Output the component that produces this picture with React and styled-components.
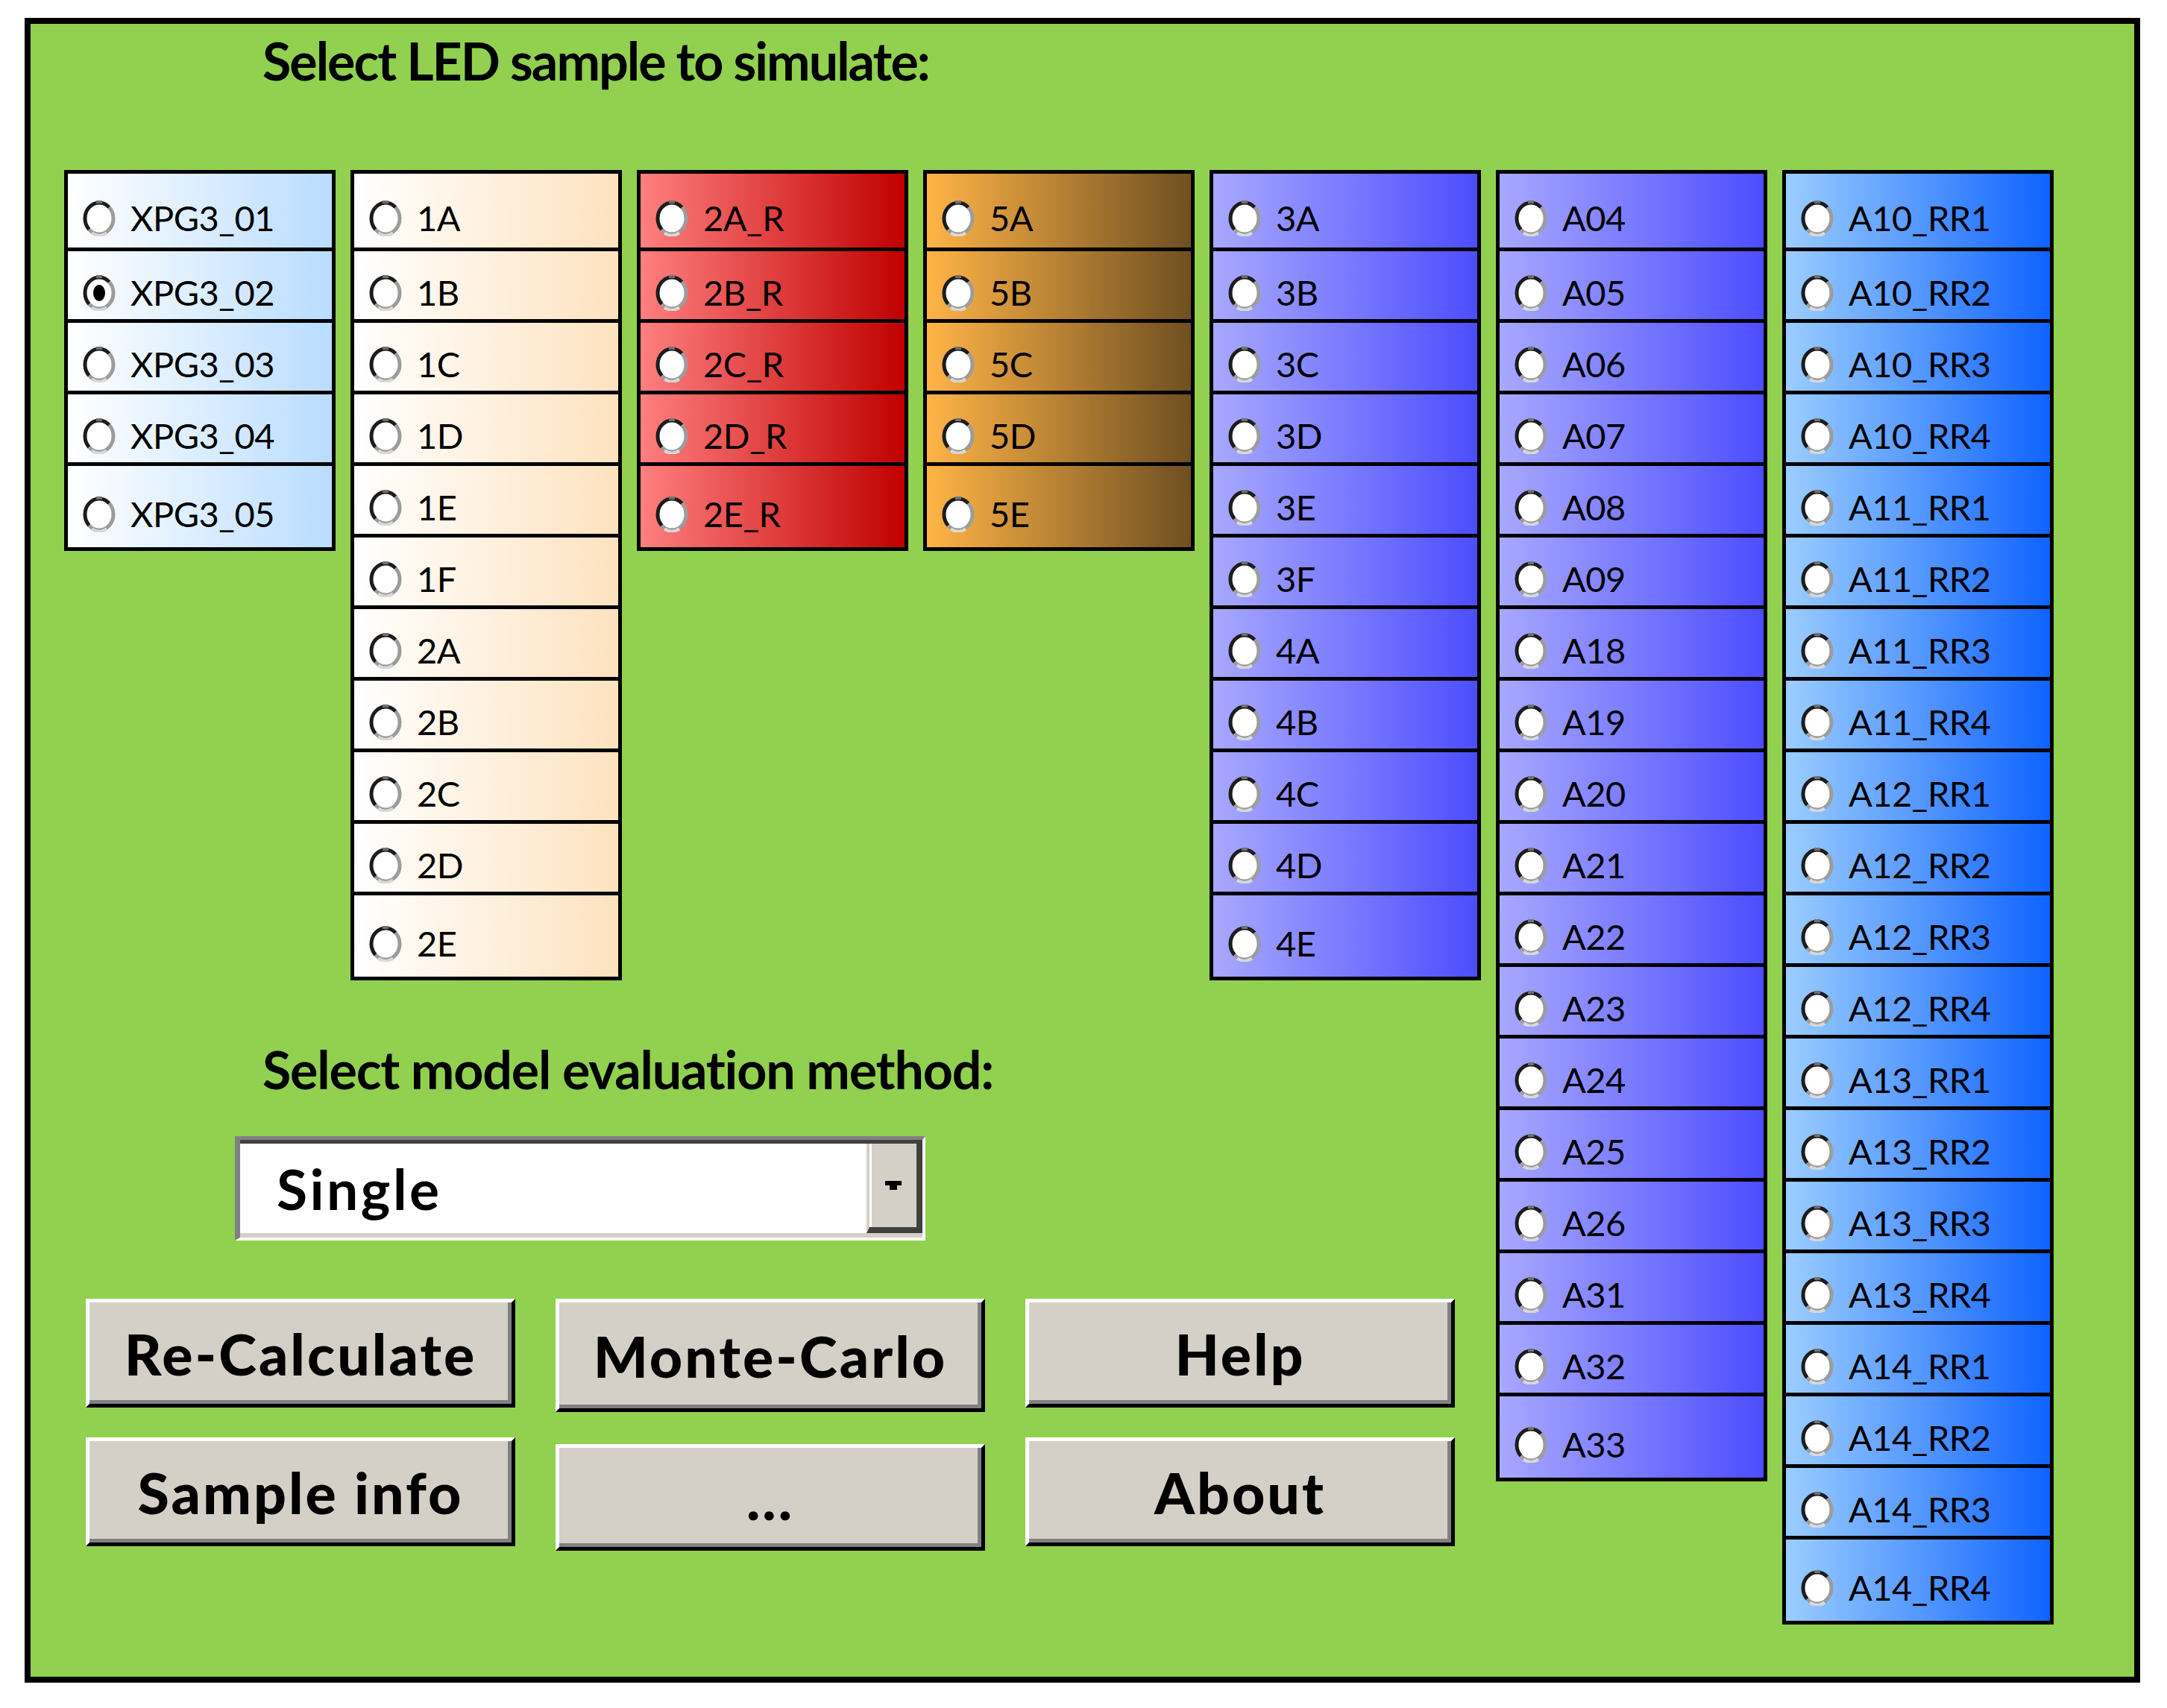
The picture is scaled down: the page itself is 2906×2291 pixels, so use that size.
import React from "react";
import styled, { createGlobalStyle } from "styled-components";

const GlobalStyle = createGlobalStyle`
  html, body {
    margin: 0;
    padding: 0;
    background: #ffffff;
  }
  body {
    font-family: Lato, "Liberation Sans", sans-serif;
  }
`;

const Frame = styled.div`
  box-sizing: border-box;
  width: 2837px;
  height: 2233px;
  margin: 24px 0 0 33px;
  border: 8px solid #000000;
  background: #92d050;
  padding: 14px 0 0 45px;
`;

const Heading = styled.div`
  margin: ${(p) => p.$top || 0}px 0 0 266px;
  font-family: Lato, sans-serif;
  font-weight: 700;
  font-size: 70px;
  line-height: 70px;
  letter-spacing: ${(p) => p.$spacing ?? -2}px;
  color: #000000;
`;

const Body = styled.div`
  display: flex;
  align-items: flex-start;
  gap: 20px;
  margin-top: 112px;
`;

const LeftArea = styled.div`
  display: flex;
  flex-direction: column;
  width: 1900px;
`;

const ColumnRow = styled.div`
  display: flex;
  align-items: flex-start;
  gap: 20px;
`;

const Column = styled.div`
  box-sizing: border-box;
  width: 364px;
  border: 5px solid #000000;
  display: flex;
  flex-direction: column;
`;

const Option = styled.label`
  box-sizing: border-box;
  display: flex;
  align-items: center;
  height: 96px;
  border-top: 5px solid #000000;
  padding: 20px 0 0 20px;
  background: linear-gradient(to right, ${(p) => p.$from}, ${(p) => p.$to});
  &:first-child {
    border-top: 0;
    height: 99px;
  }
  &:last-child {
    height: 114px;
  }
`;

const RadioMark = styled.svg`
  flex: none;
  display: block;
`;

const OptionText = styled.span`
  margin-left: 20px;
  font-family: Lato, sans-serif;
  font-size: 47px;
  line-height: 1;
  letter-spacing: -0.5px;
  color: #000000;
`;

const Combo = styled.div`
  box-sizing: border-box;
  display: flex;
  width: 926px;
  height: 140px;
  margin: 55px 0 0 229px;
  border-style: solid;
  border-width: 5px 4px 4px 7px;
  border-color: #808080 #ffffff #ffffff #808080;
`;

const ComboField = styled.div`
  flex: 1;
  display: flex;
  border-top: 5px solid #404040;
  border-bottom: 6px solid #d4d0c8;
  background: #ffffff;
`;

const ComboValue = styled.span`
  flex: 1;
  display: flex;
  align-items: center;
  padding-left: 49px;
  font-family: Lato, sans-serif;
  font-weight: 700;
  font-size: 75px;
  letter-spacing: 3.5px;
  color: #000000;
`;

const ComboButton = styled.div`
  box-sizing: border-box;
  width: 75px;
  display: flex;
  align-items: center;
  justify-content: center;
  background: #d4d0c8;
  border-left: 4px solid #d4d0c8;
  border-right: 8px solid #404040;
  border-bottom: 8px solid #404040;
  box-shadow: inset 3px 0 0 #ffffff;
`;

const ButtonGrid = styled.div`
  display: grid;
  grid-template-columns: repeat(3, 576px);
  column-gap: 54px;
  row-gap: 34px;
  align-items: start;
  margin: 78px 0 0 29px;
`;

const PushButton = styled.button`
  box-sizing: border-box;
  height: ${(p) => p.$height || 146}px;
  margin-top: ${(p) => p.$offset || 0}px;
  padding: 0;
  background: #d4d0c8;
  border-style: solid;
  border-width: 5px;
  border-color: #ffffff #000000 #000000 #ffffff;
  box-shadow: inset -5px -5px 0 #808080;
  font-family: Lato, sans-serif;
  font-weight: 900;
  font-size: 77px;
  letter-spacing: 3px;
  color: #000000;
  cursor: pointer;
`;

const groups = [
  { from: "#ffffff", to: "#b9dcff", items: ["XPG3_01", "XPG3_02", "XPG3_03", "XPG3_04", "XPG3_05"] },
  { from: "#ffffff", to: "#fde2bf", items: ["1A", "1B", "1C", "1D", "1E", "1F", "2A", "2B", "2C", "2D", "2E"] },
  { from: "#ff7f7f", to: "#c00000", items: ["2A_R", "2B_R", "2C_R", "2D_R", "2E_R"] },
  { from: "#ffb446", to: "#6f4f22", items: ["5A", "5B", "5C", "5D", "5E"] },
  { from: "#a8a8ff", to: "#4d4dff", items: ["3A", "3B", "3C", "3D", "3E", "3F", "4A", "4B", "4C", "4D", "4E"] },
];

const sideGroups = [
  {
    from: "#a8a8ff",
    to: "#4d4dff",
    items: ["A04", "A05", "A06", "A07", "A08", "A09", "A18", "A19", "A20", "A21", "A22", "A23", "A24", "A25", "A26", "A31", "A32", "A33"],
  },
  {
    from: "#9bcdff",
    to: "#0f63ff",
    items: [
      "A10_RR1", "A10_RR2", "A10_RR3", "A10_RR4",
      "A11_RR1", "A11_RR2", "A11_RR3", "A11_RR4",
      "A12_RR1", "A12_RR2", "A12_RR3", "A12_RR4",
      "A13_RR1", "A13_RR2", "A13_RR3", "A13_RR4",
      "A14_RR1", "A14_RR2", "A14_RR3", "A14_RR4",
    ],
  },
];

function Radio({ checked }) {
  return (
    <RadioMark width="44" height="48" viewBox="0 0 44 48">
      <ellipse cx="22" cy="24" rx="17" ry="19" fill="#ffffff" />
      <path d="M 8.56 38.85 A 19 21 0 0 1 35.44 9.15" stroke="#1c1c1c" strokeWidth="5" fill="none" />
      <path d="M 35.44 9.15 A 19 21 0 0 1 8.56 38.85" stroke="#9c9c9c" strokeWidth="5" fill="none" />
      <path d="M 12 43.5 A 19 21 0 0 0 32 43.5" stroke="#d8d8d8" strokeWidth="4" fill="none" />
      <rect x="18" y="0" width="8" height="4" fill="#707070" />
      {checked && <ellipse cx="22" cy="24" rx="8" ry="11" fill="#000000" />}
    </RadioMark>
  );
}

function OptionColumn({ group, selected }) {
  return (
    <Column>
      {group.items.map((name) => (
        <Option key={name} $from={group.from} $to={group.to}>
          <Radio checked={name === selected} />
          <OptionText>{name}</OptionText>
        </Option>
      ))}
    </Column>
  );
}

export default function App() {
  const selected = "XPG3_02";
  return (
    <>
      <GlobalStyle />
      <Frame>
        <Heading>Select LED sample to simulate:</Heading>
        <Body>
          <LeftArea>
            <ColumnRow>
              {groups.map((g) => (
                <OptionColumn key={g.items[0]} group={g} selected={selected} />
              ))}
            </ColumnRow>
            <Heading $top={84} $spacing={-1.2}>Select model evaluation method:</Heading>
            <Combo>
              <ComboField>
                <ComboValue>Single</ComboValue>
                <ComboButton>
                  <svg width="22" height="12" viewBox="0 0 22 12">
                    <polygon points="0,0 22,0 22,6 16,6 16,12 6,12 6,6 0,6" fill="#000000" />
                  </svg>
                </ComboButton>
              </ComboField>
            </Combo>
            <ButtonGrid>
              <PushButton>Re-Calculate</PushButton>
              <PushButton $height={152}>Monte-Carlo</PushButton>
              <PushButton>Help</PushButton>
              <PushButton>Sample info</PushButton>
              <PushButton $offset={9} $height={143}>...</PushButton>
              <PushButton>About</PushButton>
            </ButtonGrid>
          </LeftArea>
          {sideGroups.map((g) => (
            <OptionColumn key={g.items[0]} group={g} selected={selected} />
          ))}
        </Body>
      </Frame>
    </>
  );
}
